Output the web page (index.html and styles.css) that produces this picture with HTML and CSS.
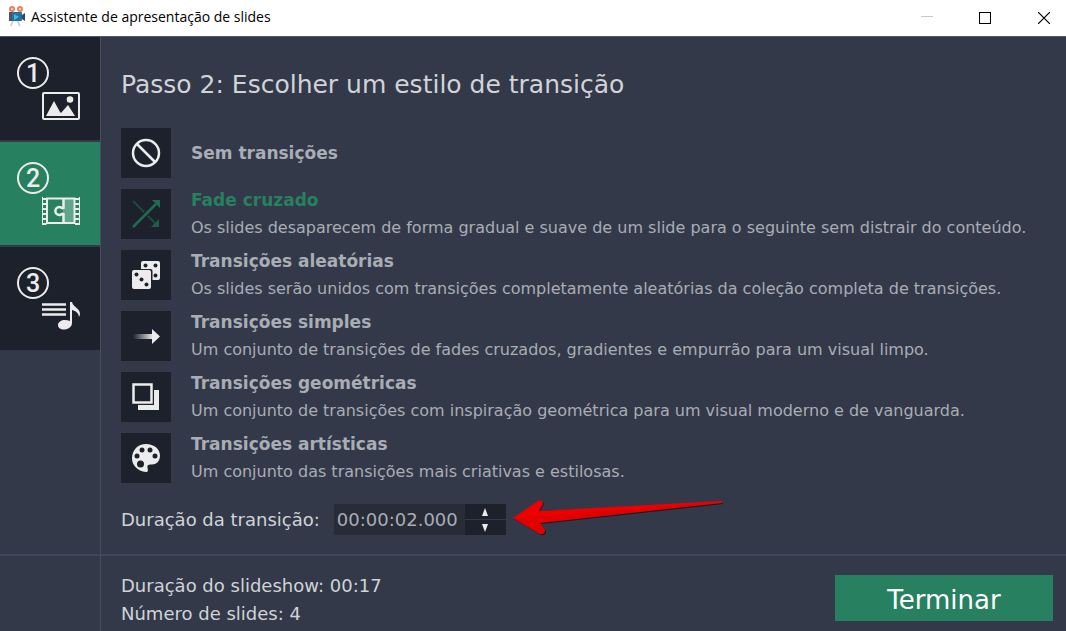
FILE: index.html
```html
<!DOCTYPE html>
<html lang="pt">
<head>
  <meta charset="UTF-8">
  <meta name="viewport" content="width=device-width, initial-scale=1.0">
  <title>Assistente de apresentação de slides</title>
  <link rel="stylesheet" href="styles.css">
</head>
<body>

<header class="titlebar">
  <svg class="app-icon" width="18" height="22" viewBox="0 0 18 22">
    <path d="M5 15l-2 6M9 15l3 6" stroke="#cfd3d6" stroke-width="2"/>
    <circle cx="4" cy="4" r="2" fill="#fbe3d5" stroke="#e8835c" stroke-width="2"/>
    <circle cx="12" cy="4" r="2" fill="#fbe3d5" stroke="#e8835c" stroke-width="2"/>
    <rect x="1" y="7" width="13" height="9" rx="1" fill="#2a6f9c"/>
    <path d="M14 10l3-2v8l-3-2z" fill="#294a66"/>
    <path d="M1 7h3v9H1z" fill="#4a5663"/>
    <path d="M6 9l5 3-5 3z" fill="#35c3e0"/>
  </svg>
  <span class="window-title">Assistente de apresentação de slides</span>
  <div class="window-buttons">
    <button type="button" aria-label="Minimizar" disabled>
      <svg width="12" height="12" viewBox="0 0 12 12"><path d="M0 4.500h12" stroke="#c8c8c8"/></svg>
    </button>
    <button type="button" aria-label="Maximizar">
      <svg width="12" height="12" viewBox="0 0 12 12"><rect x=".5" y=".5" width="11" height="11" fill="none" stroke="#000"/></svg>
    </button>
    <button type="button" aria-label="Fechar">
      <svg width="12" height="12" viewBox="0 0 12 12"><path d="M0 0l12 12M12 0L0 12" stroke="#000" stroke-width="1.200"/></svg>
    </button>
  </div>
</header>

<div class="wizard">
  <nav class="steps">
    <a class="step" href="#passo1" aria-label="Passo 1">
      <span class="step-number">1</span>
      <svg class="step-icon" width="40" height="30" viewBox="0 0 40 30">
        <rect x="2" y="2" width="36" height="26" rx="1" fill="none" stroke="#ececec" stroke-width="2"/>
        <path d="M5 25l8-15 6 11 1 1 7-8 7 11z" fill="#ececec"/>
        <circle cx="29" cy="8.500" r="3.300" fill="#ececec"/>
      </svg>
    </a>
    <a class="step step-active" href="#passo2" aria-label="Passo 2">
      <span class="step-number">2</span>
      <svg class="step-icon" width="40" height="30" viewBox="0 0 40 30">
        <path d="M22 3h11v24H22z" fill="#5fa68c"/>
        <path d="M1.500 1v28M38.500 1v28" stroke="#ececec"/>
        <path d="M3.500 2v27M36 2v27" stroke="#ececec" stroke-width="4" stroke-dasharray="2 3"/>
        <path d="M6 2.500h27.500v24.500H6z" fill="none" stroke="#ececec" stroke-width="2"/>
        <path d="M22.500 3v9c-1.500 1-2.500-1-4-1-5.500 0-5.500 8 0 8 1.500 0 2.500-2 4-1v9" fill="none" stroke="#ececec" stroke-width="2.500"/>
      </svg>
    </a>
    <a class="step" href="#passo3" aria-label="Passo 3">
      <span class="step-number">3</span>
      <svg class="step-icon" width="40" height="30" viewBox="0 0 40 30">
        <path d="M1 3.500h24M1 8.500h24M1 13.500h24" stroke="#ececec" stroke-width="2.600"/>
        <path d="M29 1h2c1 5 8 6 8 12 0 1-.5 2-1 3-.5-4-3-6-7-7v13c0 4-4 6.500-8 6.500-4 0-6-2-6-4.500 0-4 6-6.500 12-4z" fill="#ececec"/>
      </svg>
    </a>
  </nav>

  <main class="content">
    <h1>Passo 2: Escolher um estilo de transição</h1>

    <div class="options">
      <label class="option">
        <input type="radio" name="transicao" value="sem">
        <svg class="option-icon" width="30" height="30" viewBox="0 0 30 30">
          <circle cx="15" cy="15" r="13" fill="none" stroke="#ececec" stroke-width="2.500"/>
          <path d="M6 6l18 18" stroke="#ececec" stroke-width="2.500"/>
        </svg>
        <span class="option-text"><strong>Sem transições</strong></span>
      </label>
      <label class="option">
        <input type="radio" name="transicao" value="fade" checked>
        <svg class="option-icon" width="30" height="30" viewBox="0 0 30 30">
          <path d="M2 2l23 23" stroke="#1b4c40" stroke-width="2"/>
          <path d="M28 20v8h-8z" fill="#1f5c49"/>
          <path d="M2 28L25 5" stroke="#1d212b" stroke-width="5"/>
          <path d="M2 28L25 5" stroke="#226b52" stroke-width="2.500"/>
          <path d="M21 1h8v8z" fill="#226b52"/>
        </svg>
        <span class="option-text">
          <strong>Fade cruzado</strong>
          <span>Os slides desaparecem de forma gradual e suave de um slide para o seguinte sem distrair do conteúdo.</span>
        </span>
      </label>
      <label class="option">
        <input type="radio" name="transicao" value="aleatorias">
        <svg class="option-icon" width="30" height="30" viewBox="0 0 30 30">
          <rect x="10" y="1" width="19" height="19" rx="2" fill="#ececec"/>
          <g fill="#1d212b">
            <circle cx="14.500" cy="5.500" r="2"/><circle cx="24.500" cy="5.500" r="2"/><circle cx="24.500" cy="15.500" r="2"/>
          </g>
          <rect x=".5" y="9" width="21" height="21" rx="2" fill="#1d212b"/>
          <rect x="1" y="10" width="19" height="19" rx="2" fill="#ececec"/>
          <g fill="#1d212b">
            <circle cx="5.500" cy="14.500" r="2"/><circle cx="10.500" cy="19.500" r="2"/><circle cx="15.500" cy="24.500" r="2"/>
          </g>
        </svg>
        <span class="option-text">
          <strong>Transições aleatórias</strong>
          <span>Os slides serão unidos com transições completamente aleatórias da coleção completa de transições.</span>
        </span>
      </label>
      <label class="option">
        <input type="radio" name="transicao" value="simples">
        <svg class="option-icon" width="30" height="30" viewBox="0 0 30 30">
          <defs>
            <linearGradient id="tail">
              <stop offset="0" stop-color="#ececec" stop-opacity="0"/>
              <stop offset="1" stop-color="#ececec"/>
            </linearGradient>
          </defs>
          <rect x="2" y="13" width="20" height="5" fill="url(#tail)"/>
          <path d="M21 8l8 7.500-8 7.500z" fill="#ececec"/>
        </svg>
        <span class="option-text">
          <strong>Transições simples</strong>
          <span>Um conjunto de transições de fades cruzados, gradientes e empurrão para um visual limpo.</span>
        </span>
      </label>
      <label class="option">
        <input type="radio" name="transicao" value="geometricas">
        <svg class="option-icon" width="30" height="30" viewBox="0 0 30 30">
          <path d="M23 8h5v20H7v-5h16z" fill="#ececec"/>
          <rect x="2.500" y="2.500" width="18" height="18" fill="none" stroke="#ececec" stroke-width="2.500"/>
        </svg>
        <span class="option-text">
          <strong>Transições geométricas</strong>
          <span>Um conjunto de transições com inspiração geométrica para um visual moderno e de vanguarda.</span>
        </span>
      </label>
      <label class="option">
        <input type="radio" name="transicao" value="artisticas">
        <svg class="option-icon" width="30" height="30" viewBox="0 0 30 30">
          <path d="M15 1c8 0 14 5 14 11.500 0 5-3 9-8 9-3 0-5 0-4.500 3 .2 2 1 4-.5 4.500C8 29 1 23 1 15.500 1 7 7 1 15 1z" fill="#ececec"/>
          <g fill="#1d212b">
            <circle cx="11" cy="7" r="2.500"/><circle cx="19" cy="7" r="2.500"/>
            <circle cx="6" cy="13" r="2.500"/><circle cx="24" cy="13" r="2.500"/>
            <circle cx="9.500" cy="21" r="3.500"/>
          </g>
        </svg>
        <span class="option-text">
          <strong>Transições artísticas</strong>
          <span>Um conjunto das transições mais criativas e estilosas.</span>
        </span>
      </label>
    </div>

    <div class="duration">
      <label for="duracao">Duração da transição:</label>
      <div class="spinner">
        <input type="text" id="duracao" value="00:00:02.000">
        <div class="spinner-buttons">
          <button type="button" aria-label="Aumentar"><svg width="8" height="8" viewBox="0 0 8 8"><path d="M4 0l3 8H1z" fill="#ececec"/></svg></button>
          <button type="button" aria-label="Diminuir"><svg width="8" height="8" viewBox="0 0 8 8"><path d="M4 8L1 0h6z" fill="#ececec"/></svg></button>
        </div>
        <svg class="pointer" width="216" height="40" viewBox="0 0 216 40">
          <path d="M5 19L30 2q4-2 5 2l-4 7L214 3v1L32 24l5 7q0 5-5 4z" fill="#161a24"/>
          <path d="M4 18L29 1q5-2 5 3l-4 7L213 1v2L31 23l5 7q0 5-5 4z" fill="#ee0000"/>
          <path d="M4 18L213 2 31 23l5 7q0 5-5 4z" fill="#d80000" opacity=".6"/>
        </svg>
      </div>
    </div>
  </main>

  <footer class="footer">
    <div class="summary">
      <p>Duração do slideshow: 00:17</p>
      <p>Número de slides: 4</p>
    </div>
    <button type="button" class="finish">Terminar</button>
  </footer>
</div>

</body>
</html>
```

FILE: styles.css
```css
* {
  box-sizing: border-box;
}

body {
  margin: 0;
  min-height: 100vh;
  display: flex;
  flex-direction: column;
  background-color: #333948;
  color: #d0d3d8;
  font-family: "DejaVu Sans", Verdana, sans-serif;
  font-size: 18px;
}

button {
  border: none;
  padding: 0;
  font-family: inherit;
  cursor: pointer;
}

/* title bar */
.titlebar {
  display: flex;
  align-items: center;
  height: 36px;
  padding-left: 8px;
  background-color: #fff;
  color: #000;
}

.app-icon {
  margin-bottom: 4px;
}

.window-title {
  margin-left: 5px;
  padding-bottom: 4px;
  font-family: "Open Sans", "Noto Sans", sans-serif;
  font-size: 14px;
}

.window-buttons {
  display: flex;
  margin-left: auto;
}

.window-buttons button {
  display: flex;
  align-items: center;
  justify-content: center;
  width: 58px;
  height: 32px;
  background: none;
}

.window-buttons button:last-child {
  width: 44px;
  margin-left: 8px;
}

/* wizard */
.wizard {
  flex: 1;
  display: grid;
  grid-template-columns: 101px 1fr;
  grid-template-rows: 1fr auto;
  border-top: 1px solid #50576b;
}

.steps {
  grid-area: 1 / 1 / 3 / 2;
  display: flex;
  flex-direction: column;
  gap: 2px;
  border-right: 1px solid #484e60;
}

.step {
  display: flex;
  flex-direction: column;
  height: 103px;
  padding: 20px 19px 16px 17px;
  background-color: #1d212b;
  color: #ececec;
  text-decoration: none;
}

.step-active {
  background-color: #27805f;
}

.step-number {
  width: 32px;
  height: 32px;
  border: 2px solid #ececec;
  border-radius: 50%;
  font-family: Roboto, "Liberation Sans", sans-serif;
  font-size: 25px;
  font-weight: 500;
  line-height: 29px;
  text-align: center;
}

.step-icon {
  align-self: flex-end;
  margin-top: 2px;
}

.content {
  grid-area: 1 / 2;
  padding: 32px 20px 18px;
}

h1 {
  margin: 0 0 27px;
  font-size: 25px;
  font-weight: normal;
  line-height: 32px;
}

.options {
  display: grid;
  gap: 11px;
}

.option {
  display: grid;
  grid-template-columns: 50px 1fr;
  grid-template-rows: 50px;
  column-gap: 20px;
  align-items: center;
  color: #a9adb6;
  cursor: pointer;
}

.option input {
  grid-area: 1 / 1;
  appearance: none;
  width: 50px;
  height: 50px;
  margin: 0;
  background-color: #1d212b;
}

.option-icon {
  grid-area: 1 / 1;
  justify-self: center;
  z-index: 1;
}

.option-text {
  display: flex;
  flex-direction: column;
  font-size: 16px;
  line-height: 27px;
}

.option-text strong {
  font-size: 17px;
}

.option input:checked ~ .option-text strong {
  color: #27805f;
}

.duration {
  display: flex;
  align-items: center;
  gap: 14px;
  margin-top: 21px;
}

.spinner {
  position: relative;
  display: flex;
  height: 31px;
}

.spinner input {
  width: 131px;
  border: none;
  padding: 0 3px;
  background-color: #272c37;
  color: #a9adb6;
  font-family: inherit;
  font-size: 18px;
}

.spinner-buttons {
  display: grid;
  gap: 1px;
  width: 41px;
  background-color: #333948;
}

.spinner-buttons button {
  display: flex;
  align-items: center;
  justify-content: center;
  background-color: #1d212b;
}

/* red arrow over the page */
.pointer {
  position: absolute;
  left: 175px;
  top: -4px;
}

.footer {
  grid-area: 2 / 1 / 3 / 3;
  display: flex;
  justify-content: space-between;
  align-items: flex-start;
  padding: 16px 13px 3px 121px;
  border-top: 2px solid #41475a;
}

.summary p {
  margin: 0;
  line-height: 28px;
}

.finish {
  width: 218px;
  height: 46px;
  margin-top: 3px;
  padding-top: 4px;
  background-color: #27805f;
  color: #fff;
  font-size: 26px;
}
```
